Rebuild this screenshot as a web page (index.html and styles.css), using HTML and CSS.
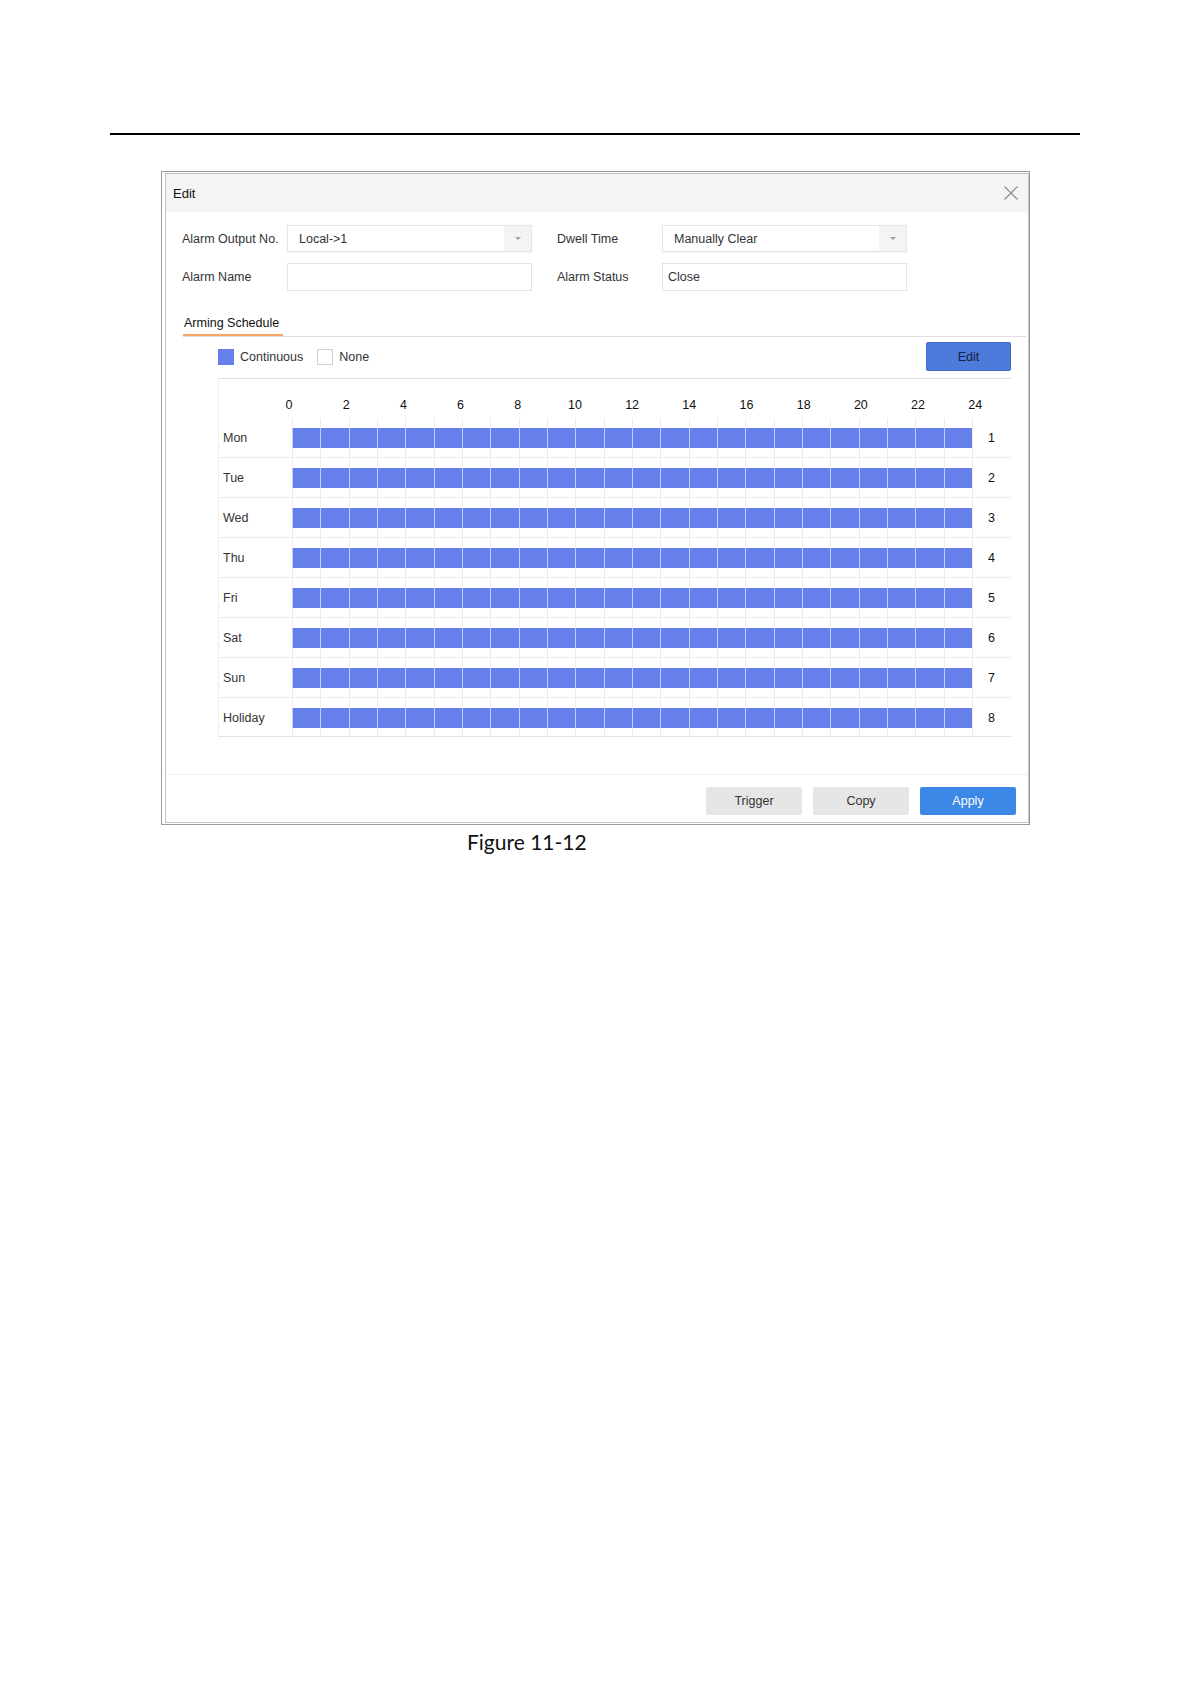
FILE: index.html
```html
<!DOCTYPE html>
<html lang="en">
<head>
  <meta charset="UTF-8">
  <title>Figure 11-12</title>
  <meta name="viewport" content="width=device-width, initial-scale=1.0">
  <link rel="stylesheet" href="styles.css">
</head>
<body>

  <div class="page">
    <div class="page-rule"></div>

    <div class="figure">
      <div class="dialog">
        <div class="dialog-inner">

          <div class="dialog-header">
            <span class="dialog-title">Edit</span>
            <svg class="close-icon" width="16" height="16" viewBox="0 0 16 16">
              <path d="M1.5 1.5L14.5 14.5M14.5 1.5L1.5 14.5" stroke="#8e8e8e" stroke-width="1.3" fill="none"/>
            </svg>
          </div>

          <div class="form">
            <div class="form-row">
              <div class="field">
                <label>Alarm Output No.</label>
                <div class="select"><span>Local-&gt;1</span><span class="select-arrow"><i></i></span></div>
              </div>
              <div class="field">
                <label>Dwell Time</label>
                <div class="select"><span>Manually Clear</span><span class="select-arrow"><i></i></span></div>
              </div>
            </div>
            <div class="form-row">
              <div class="field">
                <label>Alarm Name</label>
                <div class="text-field"></div>
              </div>
              <div class="field">
                <label>Alarm Status</label>
                <div class="text-field">Close</div>
              </div>
            </div>
          </div>

          <div class="tabs">
            <span class="tab">Arming Schedule</span>
          </div>

          <div class="legend-bar">
            <span class="swatch swatch-on"></span>
            <span class="legend-text">Continuous</span>
            <span class="swatch swatch-off"></span>
            <span class="legend-text">None</span>
            <button class="edit-btn">Edit</button>
          </div>

          <div class="schedule">
            <div class="schedule-head">
              <span>0</span><span>2</span><span>4</span><span>6</span><span>8</span><span>10</span><span>12</span>
              <span>14</span><span>16</span><span>18</span><span>20</span><span>22</span><span>24</span>
            </div>
            <div class="day-row"><span class="day">Mon</span><div class="track"><div class="bar"></div></div><span class="day-no">1</span></div>
            <div class="day-row"><span class="day">Tue</span><div class="track"><div class="bar"></div></div><span class="day-no">2</span></div>
            <div class="day-row"><span class="day">Wed</span><div class="track"><div class="bar"></div></div><span class="day-no">3</span></div>
            <div class="day-row"><span class="day">Thu</span><div class="track"><div class="bar"></div></div><span class="day-no">4</span></div>
            <div class="day-row"><span class="day">Fri</span><div class="track"><div class="bar"></div></div><span class="day-no">5</span></div>
            <div class="day-row"><span class="day">Sat</span><div class="track"><div class="bar"></div></div><span class="day-no">6</span></div>
            <div class="day-row"><span class="day">Sun</span><div class="track"><div class="bar"></div></div><span class="day-no">7</span></div>
            <div class="day-row"><span class="day">Holiday</span><div class="track"><div class="bar"></div></div><span class="day-no">8</span></div>
          </div>

          <div class="dialog-footer">
            <button class="btn">Trigger</button>
            <button class="btn">Copy</button>
            <button class="btn btn-primary">Apply</button>
          </div>

        </div>
      </div>
      <p class="caption">Figure 11-12</p>
    </div>
  </div>

</body>
</html>
```

FILE: styles.css
```css
* {
  box-sizing: border-box;
}

body {
  margin: 0;
  background: #fff;
  font-family: "Liberation Sans", Arial, sans-serif;
  font-size: 12.5px;
  color: #333;
}

.page {
  padding-top: 133px;
  min-height: 1684px;
}

.page-rule {
  margin-left: 110px;
  width: 970px;
  height: 2px;
  background: #000;
}

.figure {
  margin: 36px 0 0 161px;
  width: 869px;
}

.dialog {
  border: 1px solid #9a9a9a;
  padding: 1px 0 1px 3px;
}

.dialog-inner {
  border: 1px solid #c4c4c4;
  background: #fff;
}

.dialog-header {
  height: 38px;
  background: #f4f4f4;
  display: flex;
  justify-content: space-between;
  align-items: center;
  padding: 0 9px 0 7px;
}

.dialog-title {
  color: #111;
  font-size: 13px;
}

.close-icon {
  display: block;
}

/* form */

.form {
  padding: 13px 0 0 16px;
}

.form-row {
  display: flex;
  align-items: center;
}

.form-row + .form-row {
  margin-top: 11px;
}

.field {
  display: flex;
  align-items: center;
}

.field + .field {
  margin-left: 25px;
}

.field label {
  width: 105px;
  color: #333;
}

.select {
  width: 245px;
  height: 27px;
  border: 1px solid #e6e6e6;
  box-shadow: 0 1px 1px rgba(0, 0, 0, 0.04);
  display: flex;
  align-items: center;
  justify-content: space-between;
  padding-left: 11px;
  color: #333;
}

.select-arrow {
  width: 27px;
  height: 100%;
  background: #f4f4f4;
  display: flex;
  align-items: center;
  justify-content: center;
}

.select-arrow i {
  width: 0;
  height: 0;
  border-left: 3px solid transparent;
  border-right: 3px solid transparent;
  border-top: 3px solid #a0a0a0;
}

.text-field {
  width: 245px;
  height: 28px;
  border: 1px solid #e3e3e3;
  padding-left: 5px;
  line-height: 26px;
  color: #333;
}

/* tab */

.tabs {
  margin: 17px 2px 0 17px;
  border-bottom: 1px solid #dcdcdc;
}

.tab {
  display: inline-block;
  width: 100px;
  padding: 8px 0 3px 1px;
  line-height: 15px;
  color: #111;
  border-bottom: 2px solid #f2a66a;
}

/* legend + edit */

.legend-bar {
  display: flex;
  align-items: center;
  height: 29px;
  margin: 5px 17px 0 52px;
}

.swatch {
  width: 16px;
  height: 16px;
}

.swatch-on {
  background: #6580ea;
}

.swatch-off {
  border: 1px solid #cfcfcf;
  background: #fff;
  margin-left: 14px;
}

.legend-text {
  margin-left: 6px;
  color: #333;
}

.edit-btn {
  margin-left: auto;
  width: 85px;
  height: 29px;
  background: #4c7bdc;
  border: 1px solid #3f6bc8;
  border-radius: 2px;
  color: #16213f;
  font-family: inherit;
  font-size: 12.5px;
}

/* schedule table */

.schedule {
  margin: 7px 17px 37px 52px;
  border-top: 1px solid #dedede;
  border-left: 1px solid #efefef;
}

.schedule-head {
  display: flex;
  align-items: flex-end;
  height: 39px;
  padding: 0 0 5px 41.4px;
  color: #111;
}

.schedule-head span {
  width: 57.2px;
  text-align: center;
  line-height: 15px;
}

.day-row {
  display: flex;
  height: 40px;
  border-bottom: 1px solid #ececec;
}

.day-row:last-child {
  height: 39px;
  border-bottom-color: #e2e2e2;
}

.day {
  width: 73px;
  padding-left: 4px;
  line-height: 40px;
  color: #333;
}

.track {
  width: 681px;
  border-right: 1px solid #ebebeb;
  background: repeating-linear-gradient(to right, #ebebeb 0 1px, transparent 1px calc(100% / 24));
}

.bar {
  margin-top: 10px;
  height: 20px;
  background: repeating-linear-gradient(to right, #c2ccf7 0 1px, #6580ea 1px calc(100% / 24));
}

.day-no {
  padding-left: 15px;
  line-height: 40px;
  color: #111;
}

/* footer */

.dialog-footer {
  border-top: 1px solid #efefef;
  display: flex;
  justify-content: flex-end;
  gap: 11px;
  padding: 12px 12px 7px 0;
}

.btn {
  width: 96px;
  height: 28px;
  border: none;
  border-radius: 2px;
  background: #e6e6e6;
  color: #333;
  font-family: inherit;
  font-size: 12.5px;
}

.btn-primary {
  background: #3b88e7;
  color: #fff;
}

.caption {
  margin: 5px 0 0 306px;
  font-family: Lato, "Open Sans", sans-serif;
  font-size: 21px;
  line-height: 24px;
  color: #111;
}
```
